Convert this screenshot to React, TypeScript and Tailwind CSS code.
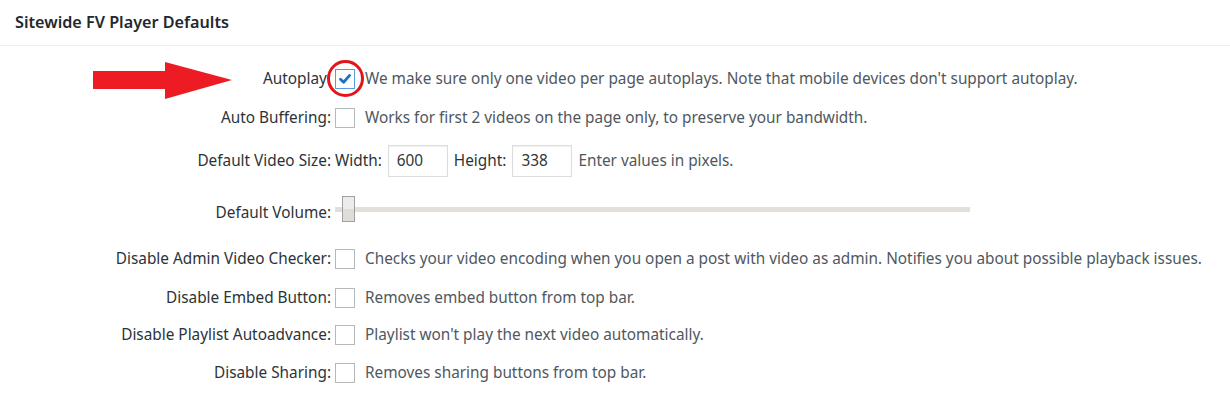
import React from 'react';

const font = { fontFamily: '"Noto Sans", "Open Sans", sans-serif' };

const Checkbox: React.FC<{ checked?: boolean }> = ({ checked }) => (
  <span
    className={`inline-flex h-5 w-5 shrink-0 items-center justify-center border bg-white ${
      checked ? 'border-[#5b9dd9]' : 'border-[#b4b9be]'
    }`}
  >
    {checked && (
      <svg width="14" height="14" viewBox="0 0 14 14">
        <path d="M2.5 7.2 L5.6 10.2 L11.6 3.4" fill="none" stroke="#1e73be" strokeWidth="2.8" strokeLinecap="round" strokeLinejoin="round" />
      </svg>
    )}
  </span>
);

const Row: React.FC<{ label: string; h: string; children: React.ReactNode }> = ({ label, h, children }) => (
  <div className={`flex items-center ${h}`}>
    <div className="w-[331px] shrink-0 whitespace-nowrap text-right text-[#2c3338]">{label}</div>
    <div className="ml-1 flex items-center">{children}</div>
  </div>
);

const CheckRow: React.FC<{ label: string; h: string; desc: string; checked?: boolean }> = ({ label, h, desc, checked }) => (
  <Row label={label} h={h}>
    <Checkbox checked={checked} />
    <span className="ml-2.5 whitespace-nowrap text-[#50575e]">{desc}</span>
  </Row>
);

export default function App() {
  return (
    <div className="relative h-[396px] w-[1230px] overflow-hidden bg-white text-[15.35px]" style={font}>
      <div className="flex h-[46px] items-center border-b border-[#eeeeee] px-[15px]">
        <h2 className="text-[16.2px] font-semibold text-[#23282d]">Sitewide FV Player Defaults</h2>
      </div>

      <div className="pt-[14px]">
        <CheckRow
          label="Autoplay:"
          h="h-[38px]"
          checked
          desc="We make sure only one video per page autoplays. Note that mobile devices don't support autoplay."
        />
        <CheckRow
          label="Auto Buffering:"
          h="h-[40px]"
          desc="Works for first 2 videos on the page only, to preserve your bandwidth."
        />
        <Row label="Default Video Size:" h="h-[46px]">
          <span className="text-[#2c3338]">Width:</span>
          <span className="ml-1.5 flex h-8 w-[60px] items-center border border-[#dddddd] px-2 text-[#32373c] shadow-[inset_0_1px_2px_rgba(0,0,0,0.07)]">600</span>
          <span className="ml-1.5 text-[#2c3338]">Height:</span>
          <span className="ml-1.5 flex h-8 w-[60px] items-center border border-[#dddddd] px-2 text-[#32373c] shadow-[inset_0_1px_2px_rgba(0,0,0,0.07)]">338</span>
          <span className="ml-1.5 text-[#50575e]">Enter values in pixels.</span>
        </Row>
        <Row label="Default Volume:" h="h-[58px]">
          <div className="relative -mt-2 flex h-[26px] w-[635px] items-center">
            <div className="h-[5px] w-full bg-[#e3dfdb]" />
            <div className="absolute left-[7px] top-0 flex h-[26px] w-[13px] flex-col border border-[#a0a0a0]">
              <div className="h-1/2 bg-[#ececec]" />
              <div className="h-1/2 bg-[#e0dcd8]" />
            </div>
          </div>
        </Row>
        <CheckRow
          label="Disable Admin Video Checker:"
          h="h-[34px]"
          desc="Checks your video encoding when you open a post with video as admin. Notifies you about possible playback issues."
        />
        <CheckRow label="Disable Embed Button:" h="h-[44px]" desc="Removes embed button from top bar." />
        <CheckRow
          label="Disable Playlist Autoadvance:"
          h="h-[30px]"
          desc="Playlist won't play the next video automatically."
        />
        <CheckRow label="Disable Sharing:" h="h-[46px]" desc="Removes sharing buttons from top bar." />
      </div>

      {/* annotation overlays */}
      <svg className="absolute left-[90px] top-[58px]" width="150" height="46" viewBox="0 0 150 46">
        <polygon points="3,13 75,13 75,4 142,22 75,41 75,31 3,31" fill="#ed1c24" />
      </svg>
      <span className="absolute left-[327px] top-[60px] h-[37px] w-[37px] rounded-full border-[3px] border-[#e3141b]" />
    </div>
  );
}
